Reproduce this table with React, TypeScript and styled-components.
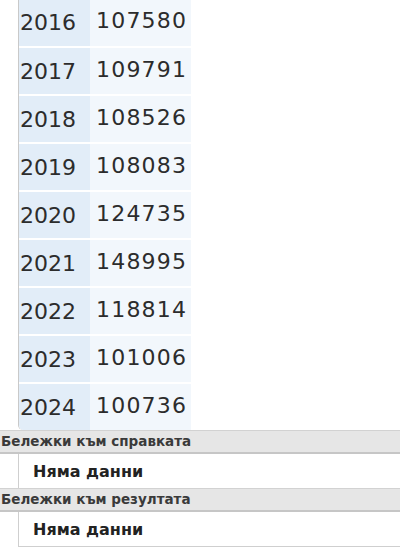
import React from "react";
import styled, { createGlobalStyle } from "styled-components";

const GlobalStyle = createGlobalStyle`
  body {
    margin: 0;
    background: #ffffff;
    font-family: "DejaVu Sans", Verdana, sans-serif;
    color: #333333;
    overflow: hidden;
  }
`;

const Page = styled.div`
  width: 400px;
  margin-top: -2px;
`;

const Table = styled.div`
  margin-left: 18px;
  width: 172px;
  border-left: 1px solid #c9c9c9;
  border-bottom-left-radius: 5px;
  overflow: hidden;
`;

const Row = styled.div`
  display: grid;
  grid-template-columns: 71px 1fr;
  height: 48px;
  border-top: 2px solid #ffffff;
  box-sizing: border-box;
  &:first-child {
    border-top: none;
  }
`;

const Cell = styled.div<{ $year?: boolean }>`
  display: flex;
  align-items: center;
  padding-left: ${(p) => (p.$year ? "1px" : "6px")};
  padding-bottom: ${(p) => (p.$year ? "0" : "3px")};
  font-size: 22px;
  letter-spacing: ${(p) => (p.$year ? "0" : "1.2px")};
  color: #2c2c2c;
  background: ${(p) => (p.$year ? "#e2edf8" : "#f2f7fc")};
`;

const Label = styled.div`
  height: 21px;
  line-height: 21px;
  padding-left: 1px;
  background: #e6e6e6;
  border-top: 1px solid #d2d2d2;
  border-bottom: 2px solid #c6c6c6;
  font-size: 13.5px;
  font-weight: bold;
  color: #3a3a3a;
`;

const Note = styled.div<{ $last?: boolean }>`
  margin-left: 18px;
  height: 34px;
  display: flex;
  align-items: center;
  padding-left: 14px;
  border-left: 1px solid #cfcfcf;
  border-bottom: ${(p) => (p.$last ? "1px solid #cfcfcf" : "none")};
  font-size: 16px;
  font-weight: bold;
  color: #222222;
`;

const rows: [string, string][] = [
  ["2016", "107580"],
  ["2017", "109791"],
  ["2018", "108526"],
  ["2019", "108083"],
  ["2020", "124735"],
  ["2021", "148995"],
  ["2022", "118814"],
  ["2023", "101006"],
  ["2024", "100736"],
];

export default function App() {
  return (
    <Page>
      <GlobalStyle />
      <Table>
        {rows.map(([year, value]) => (
          <Row key={year}>
            <Cell $year>{year}</Cell>
            <Cell>{value}</Cell>
          </Row>
        ))}
      </Table>
      <Label>Бележки към справката</Label>
      <Note>Няма данни</Note>
      <Label>Бележки към резултата</Label>
      <Note $last>Няма данни</Note>
    </Page>
  );
}
